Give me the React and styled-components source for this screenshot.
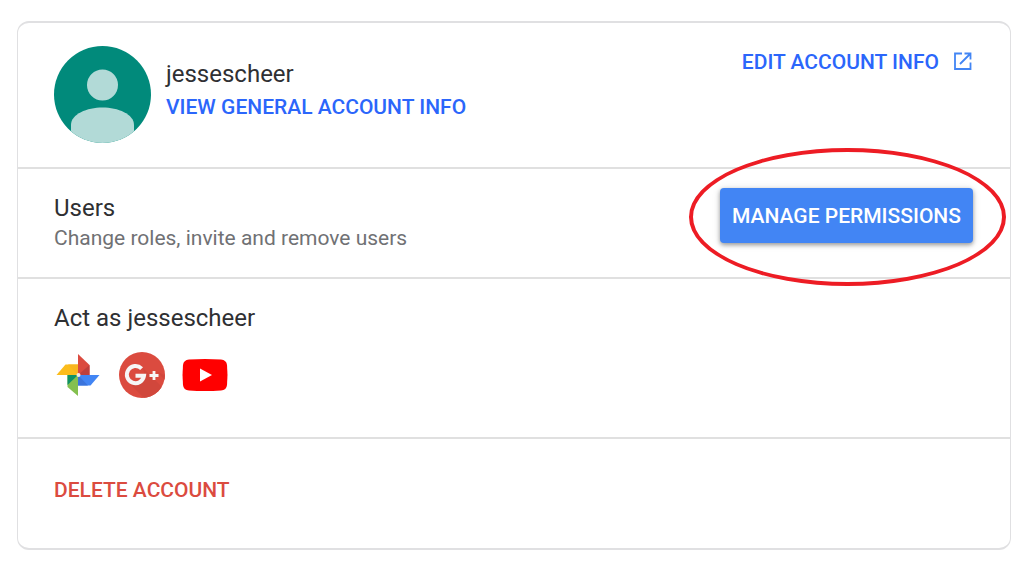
import React from 'react';
import styled, { createGlobalStyle } from 'styled-components';

const GlobalStyle = createGlobalStyle`
  body {
    margin: 0;
    background: #fff;
    color: #2f3033;
    font-family: Roboto, "Liberation Sans", sans-serif;
  }
`;

const Page = styled.main`
  padding: 21px 13px 15px 17px;
`;

const Card = styled.section`
  border: solid #e0e0e2;
  border-width: 2px 1px;
  border-radius: 12px;
`;

const Row = styled.div`
  display: flex;
  justify-content: space-between;
  align-items: flex-start;
  padding: ${(props) => props.$padding};

  & + & {
    border-top: 2px solid #e0e0e0;
  }
`;

const Profile = styled.div`
  display: flex;
  align-items: flex-start;
  gap: 15px;
`;

const Details = styled.div`
  display: flex;
  flex-direction: column;
  align-items: flex-start;
  gap: ${(props) => props.$gap || 0};
  padding-top: ${(props) => props.$top};
`;

const Avatar = styled.svg`
  display: block;
  width: 97px;
  height: 97px;
`;

const Title = styled.h2`
  margin: 0;
  font-size: 24px;
  font-weight: 400;
  line-height: 32px;
`;

const Subtitle = styled.p`
  margin: 0;
  color: #707174;
  font-size: 21px;
  line-height: 28px;
`;

const TextLink = styled.a`
  display: inline-flex;
  align-items: center;
  gap: 14px;
  color: ${(props) => props.$color || '#2b66fb'};
  font-size: 21px;
  font-weight: 500;
  line-height: 32px;
  text-decoration: none;
  text-transform: uppercase;
`;

const Highlight = styled.div`
  position: relative;
`;

const Ring = styled.span`
  position: absolute;
  inset: -40px -33px -43px -31px;
  border: 4px solid #ed1c24;
  border-radius: 50%;
  pointer-events: none;
`;

const PrimaryButton = styled.button`
  display: block;
  padding: 12px 12px 11px;
  border: 0;
  border-radius: 4px;
  background: #4285f4;
  box-shadow: 0 2px 4px rgba(0, 0, 0, 0.35), 0 1px 8px rgba(0, 0, 0, 0.12);
  color: #fff;
  font-family: inherit;
  font-size: 21px;
  font-weight: 500;
  line-height: 32px;
  text-transform: uppercase;
  cursor: pointer;
`;

const AppList = styled.div`
  display: flex;
  gap: 16px;
  margin-top: 17px;
`;

const AppLink = styled.a`
  display: block;

  svg {
    display: block;
    width: 48px;
    height: 48px;
  }
`;

const AccountAvatar = () => (
  <Avatar viewBox="0 0 97 97" aria-hidden="true">
    <defs>
      <clipPath id="avatar-clip">
        <circle cx="48.5" cy="48.5" r="48.5" />
      </clipPath>
    </defs>
    <g clipPath="url(#avatar-clip)">
      <rect width="97" height="97" fill="#018a7b" />
      <circle cx="48.5" cy="39" r="15.5" fill="#b2dad7" />
      <path d="M17 97V79C17 68 33 61.5 48.5 61.5S80 68 80 79v18z" fill="#b2dad7" />
    </g>
  </Avatar>
);

const OpenIcon = () => (
  <svg width="20" height="20" viewBox="0 0 20 20" fill="none" stroke="#4285f4" strokeWidth="1.8" aria-hidden="true">
    <path d="M9 1.5H2v15.5h15.500V10.500" />
    <path d="M11.500 1.500h6v6M17 2 7 12" />
  </svg>
);

const PhotosIcon = () => (
  <svg viewBox="0 0 48 48" aria-hidden="true">
    <path d="M24 3 35.500 14v10H24z" fill="#db4b3f" />
    <path d="M24 24 35.500 14v10z" fill="#bf3f3c" />
    <path d="M45.500 24 36.500 34.500H24V24z" fill="#4285f4" />
    <path d="m24 24 10 10.500H24z" fill="#3b74dc" />
    <path d="M24 45 13.500 36V24H24z" fill="#84c04f" />
    <path d="M24 24 13.500 34V24z" fill="#0f9166" />
    <path d="m2.500 24 9-10.500H24V24z" fill="#fbbc1c" />
    <path d="M24 24 14 13.500h10z" fill="#f9b51f" />
    <circle cx="24.500" cy="24" r="2" fill="#f5e9e5" />
  </svg>
);

const PlusIcon = () => (
  <svg viewBox="0 0 48 48" aria-hidden="true">
    <defs>
      <clipPath id="plus-clip">
        <circle cx="24" cy="24" r="23" />
      </clipPath>
    </defs>
    <g clipPath="url(#plus-clip)">
      <rect width="48" height="48" fill="#db4b3f" />
      <path d="m25 17 23 23v8H27L10 31l7 1 10-7zM38 20l10 10v-5z" fill="#d1473c" />
    </g>
    <path
      d="M23.600 17.600A8.600 8.600 0 1 0 26 24.800H17.500"
      fill="none"
      stroke="#f6f6f6"
      strokeWidth="4"
    />
    <path d="M36 20v9M31.500 24.500h9" fill="none" stroke="#f6f6f6" strokeWidth="2.800" />
  </svg>
);

const VideoIcon = () => (
  <svg viewBox="0 0 48 48" aria-hidden="true">
    <path
      d="M7 8.500Q23 7.500 39 8.500 44.500 9 45 14q1 10 0 20-.5 5-6 5.500-16 1-32 0-5.500-.5-6-5.500-1-10 0-20 .5-5 6-5.500z"
      fill="#f00"
    />
    <path d="m18 17.500 12 6.500-12 6.500z" fill="#fff" />
  </svg>
);

const apps = [
  { name: 'Google Photos', Icon: PhotosIcon },
  { name: 'Google+', Icon: PlusIcon },
  { name: 'YouTube', Icon: VideoIcon },
];

const App = () => {
  return (
    <>
      <GlobalStyle />
      <Page>
        <Card>
          {/* Account header */}
          <Row $padding="23px 37px 24px 36px">
            <Profile>
              <AccountAvatar />
              <Details $top="12px" $gap="1px">
                <Title>jessescheer</Title>
                <TextLink href="#info">View general account info</TextLink>
              </Details>
            </Profile>
            <TextLink href="#edit">
              Edit account info
              <OpenIcon />
            </TextLink>
          </Row>

          {/* Users */}
          <Row $padding="19px 37px 25px 36px">
            <Details $top="4px">
              <Title>Users</Title>
              <Subtitle>Change roles, invite and remove users</Subtitle>
            </Details>
            <Highlight>
              <PrimaryButton type="button">Manage permissions</PrimaryButton>
              <Ring />
            </Highlight>
          </Row>

          {/* Linked apps */}
          <Row $padding="23px 37px 38px 36px">
            <div>
              <Title>Act as jessescheer</Title>
              <AppList>
                {apps.map(({ name, Icon }) => (
                  <AppLink key={name} href="#app" aria-label={name}>
                    <Icon />
                  </AppLink>
                ))}
              </AppList>
            </div>
          </Row>

          <Row $padding="35px 37px 42px 36px">
            <TextLink href="#delete" $color="#db4b3f">
              Delete account
            </TextLink>
          </Row>
        </Card>
      </Page>
    </>
  );
};

export default App;
